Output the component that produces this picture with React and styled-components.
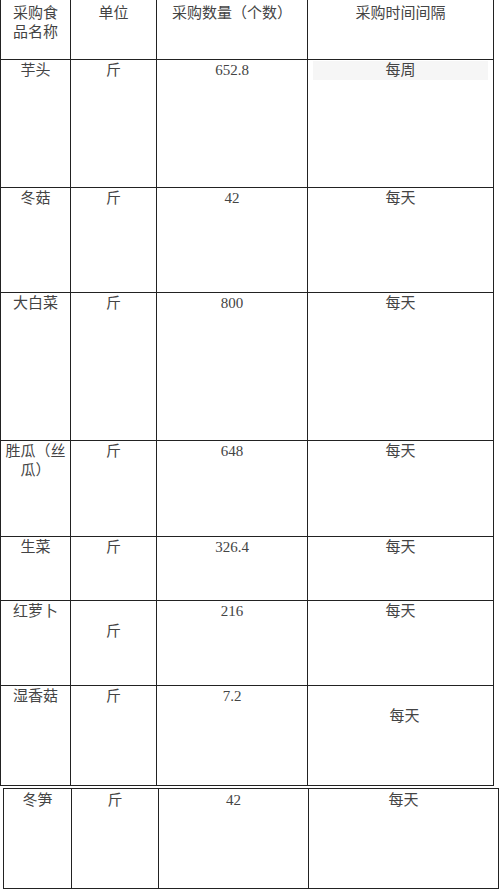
import React from 'react';
import styled, { createGlobalStyle } from 'styled-components';

const GlobalStyle = createGlobalStyle`
  html, body {
    margin: 0;
    padding: 0;
    background: #fff;
  }
  body {
    font-family: "Liberation Serif", "Noto Sans CJK SC", serif;
    color: #444;
  }
`;

const Page = styled('div')`
  width: 500px;
  height: 891px;
  overflow: hidden;
`;

const Sheet = styled('div')`
  display: grid;
  grid-template-columns: ${(p) => p.$cols};
  grid-template-rows: ${(p) => p.$rows};
  width: max-content;
  margin: ${(p) => p.$margin};
  border-left: 1px solid #222;
  border-top: 1px solid #222;
`;

const Cell = styled('div')`
  box-sizing: border-box;
  border-right: 1px solid #222;
  border-bottom: 1px solid #222;
  padding: ${(p) => p.$top ?? 1}px 4px 0 ${(p) => 4 + (p.$shift || 0)}px;
  font-size: 15px;
  line-height: 19px;
  text-align: center;
  overflow: hidden;
`;

const Line = styled('div')`
  margin: ${(p) => (p.$drop ? 20 : 0)}px ${(p) => (p.$mark ? 1 : 0)}px 0;
  background: ${(p) => (p.$mark ? '#f6f6f6' : 'transparent')};
  white-space: nowrap;
`;

const header = ['采购食\n品名称', '单位', '采购数量（个数）', '采购时间间隔'];

const rows = [
  { name: '芋头', unit: '斤', qty: '652.8', every: '每周', h: 128, mark: true },
  { name: '冬菇', unit: '斤', qty: '42', every: '每天', h: 105 },
  { name: '大白菜', unit: '斤', qty: '800', every: '每天', h: 148 },
  { name: '胜瓜（丝\n瓜）', unit: '斤', qty: '648', every: '每天', h: 96 },
  { name: '生菜', unit: '斤', qty: '326.4', every: '每天', h: 64 },
  { name: '红萝卜', unit: '斤', qty: '216', every: '每天', h: 85, unitDrop: true },
  { name: '湿香菇', unit: '斤', qty: '7.2', every: '每天', h: 100, everyDrop: true, shift: 8 },
];

const lastRow = { name: '冬笋', unit: '斤', qty: '42', every: '每天' };

const Lines = ({ text, drop, mark }) =>
  text.split('\n').map((t, i) => (
    <Line key={i} $drop={drop && i === 0} $mark={mark}>
      {t}
    </Line>
  ));

const App = () => (
  <Page>
    <GlobalStyle />
    <Sheet
      $cols="70px 86px 151px 186px"
      $rows={`60px ${rows.map((r) => `${r.h}px`).join(' ')}`}
      $margin="-1px 0 0 0"
    >
      {header.map((h) => (
        <Cell key={h} $top={4}>
          <Lines text={h} />
        </Cell>
      ))}
      {rows.map((r) => (
        <React.Fragment key={r.name}>
          <Cell>
            <Lines text={r.name} />
          </Cell>
          <Cell>
            <Lines text={r.unit} drop={r.unitDrop} />
          </Cell>
          <Cell>
            <Lines text={r.qty} />
          </Cell>
          <Cell $shift={r.shift}>
            <Lines text={r.every} drop={r.everyDrop} mark={r.mark} />
          </Cell>
        </React.Fragment>
      ))}
    </Sheet>
    <Sheet $cols="68px 87px 150px 190px" $rows="100px" $margin="2px 0 0 3px">
      <Cell $top={2}>
        <Lines text={lastRow.name} />
      </Cell>
      <Cell $top={2}>
        <Lines text={lastRow.unit} />
      </Cell>
      <Cell $top={2}>
        <Lines text={lastRow.qty} />
      </Cell>
      <Cell $top={2}>
        <Lines text={lastRow.every} />
      </Cell>
    </Sheet>
  </Page>
);

export default App;
